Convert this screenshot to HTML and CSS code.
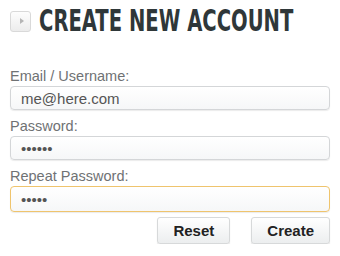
FILE: index.html
```html
<!DOCTYPE html>
<html lang="en">
<head>
    <meta charset="UTF-8">
    <title>Create New Account</title>
    <link rel="stylesheet" href="styles.css">
</head>
<body>
    <div class="panel">
        <div class="header">
            <span class="toggle"><span class="arrow"></span></span>
            <h1>Create New Account</h1>
        </div>
        <form class="form">
            <label class="label" for="email">Email / Username:</label>
            <input class="field" id="email" type="text" value="me@here.com">
            <label class="label" for="password">Password:</label>
            <input class="field" id="password" type="password" value="secret">
            <label class="label" for="repeat">Repeat Password:</label>
            <input class="field focused" id="repeat" type="password" value="secre">
            <div class="buttons">
                <button type="reset" class="btn">Reset</button>
                <button type="button" class="btn">Create</button>
            </div>
        </form>
    </div>
</body>
</html>
```

FILE: styles.css
```css
/* General Styles */
body {
    margin: 0;
    padding: 0;
    background-color: #fff;
    font-family: "Liberation Sans", Arial, sans-serif;
}

.panel {
    padding: 10px 10px 0 10px;
}

/* Header Styles */
.header {
    display: flex;
    align-items: center;
    gap: 8px;
    height: 22px;
    margin-bottom: 34px;
}
.toggle {
    flex: none;
    display: flex;
    align-items: center;
    justify-content: center;
    width: 19px;
    height: 19px;
    border: 1px solid #d9d9d9;
    border-radius: 3px;
    background: linear-gradient(#fdfdfd, #ececec);
}
.arrow {
    width: 0;
    height: 0;
    margin-left: 2px;
    border-top: 3px solid transparent;
    border-bottom: 3px solid transparent;
    border-left: 4px solid #b5b5b5;
}
h1 {
    margin: 0;
    font-family: "DejaVu Sans Condensed", "DejaVu Sans", sans-serif;
    font-size: 30px;
    font-weight: bold;
    line-height: 22px;
    white-space: nowrap;
    text-transform: uppercase;
    color: #2f3739;
    transform: scaleX(0.726);
    transform-origin: left center;
}

/* Form Styles */
.form {
    display: flex;
    flex-direction: column;
}
.label {
    font-size: 14.5px;
    line-height: 20px;
    color: #6f7274;
}
.field {
    box-sizing: border-box;
    height: 24px;
    margin: 0 0 6px 0;
    padding: 0 10px;
    border: 1px solid #d4d6d8;
    border-radius: 4px;
    background: linear-gradient(#fff, #f6f7f8);
    box-shadow: 0 1px 1px rgba(0, 0, 0, 0.08);
    font-family: "Liberation Sans", Arial, sans-serif;
    font-size: 15px;
    color: #555;
    outline: none;
}
.field.focused {
    height: 26px;
    margin-bottom: 5px;
    border-color: #efc46d;
}

/* Buttons Styles */
.buttons {
    display: flex;
    justify-content: flex-end;
    gap: 21px;
}
.btn {
    box-sizing: border-box;
    height: 27px;
    padding: 0 15px;
    border: 1px solid #d7d9da;
    border-radius: 3px;
    background: linear-gradient(#fff, #eceeef);
    box-shadow: 0 1px 1px rgba(0, 0, 0, 0.12);
    font-family: "Liberation Sans", Arial, sans-serif;
    font-size: 15px;
    font-weight: bold;
    color: #222;
}
```
